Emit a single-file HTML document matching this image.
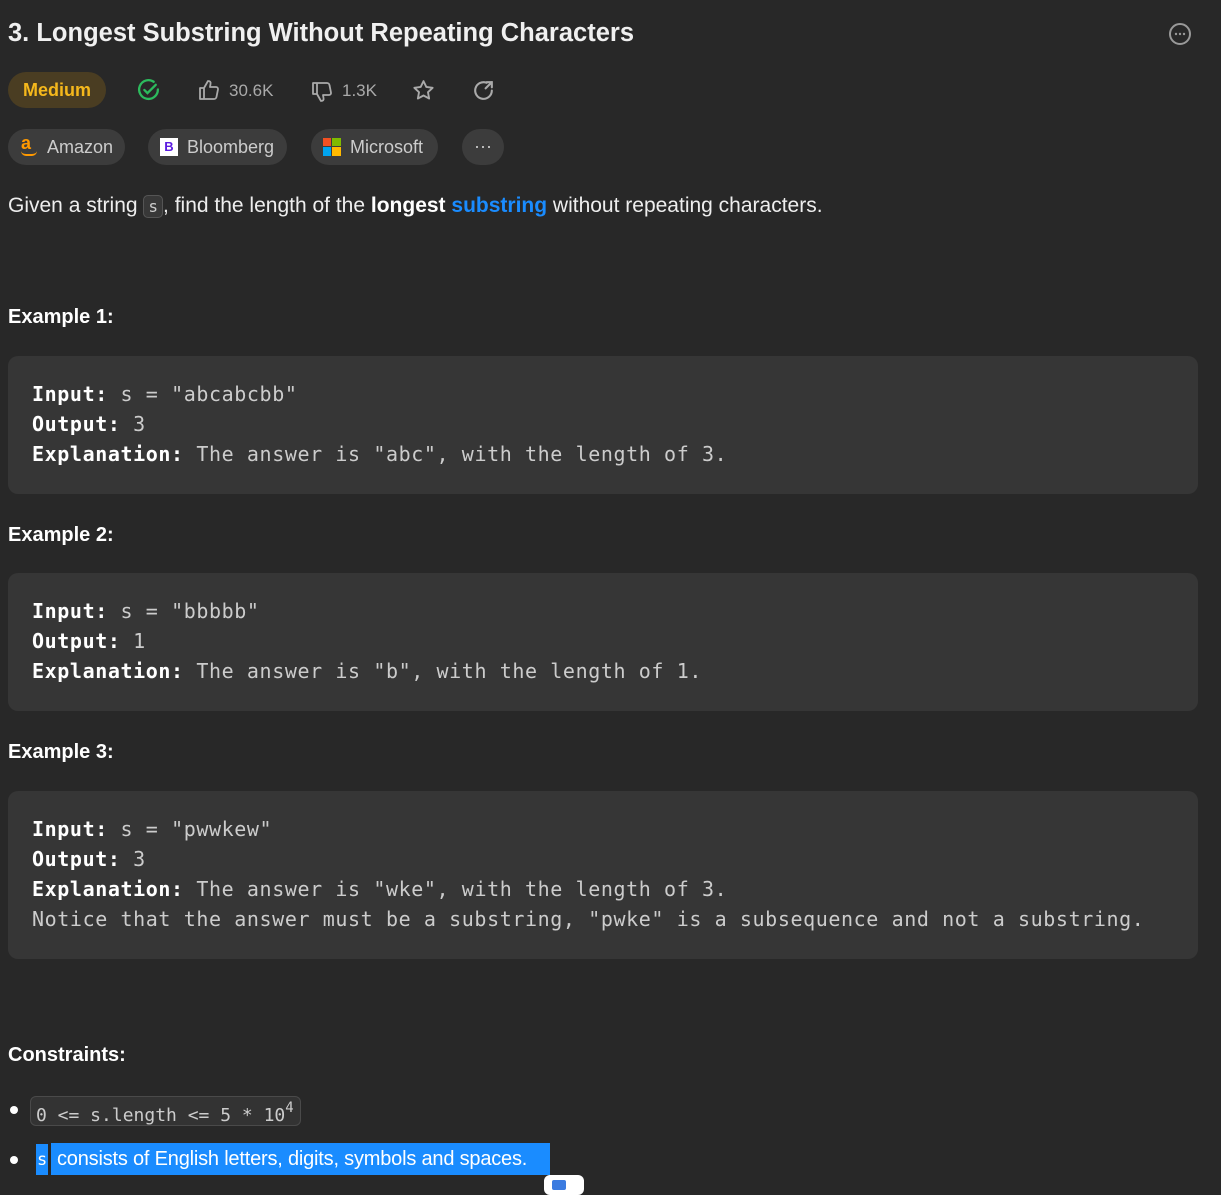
<!DOCTYPE html>
<html><head><meta charset="utf-8"><style>
body{margin:0;background:#282828;width:1221px;height:1185px;overflow:hidden;font-family:"Liberation Sans",sans-serif;color:#eee;position:relative}
.a{position:absolute;white-space:nowrap}
.title{left:8px;top:19px;font-size:25.5px;font-weight:bold;color:#f0f0f0}
.pill{position:absolute;height:36px;border-radius:18px;background:#3c3c3c;font-size:18px;color:#ccc;line-height:36px;box-sizing:border-box}
.mono{font-family:"DejaVu Sans Mono","Liberation Mono",monospace}
.box{position:absolute;left:8px;width:1190px;background:#363636;border-radius:10px}
.box pre{margin:0;position:absolute;left:24px;top:23px;font-family:"DejaVu Sans Mono",monospace;font-size:20px;letter-spacing:0.6px;line-height:30px;color:#ccc}
.box b{color:#fff}
.h{font-size:20px;font-weight:bold;color:#fff;left:8px}
.ic{color:#aaa;font-size:17px}
</style></head><body>
<div class="a title">3. Longest Substring Without Repeating Characters</div>
<svg class="a" style="left:1168px;top:22px" width="24" height="24" viewBox="0 0 24 24"><circle cx="12" cy="12" r="10" fill="none" stroke="#999" stroke-width="2"/><circle cx="8" cy="12" r="1.2" fill="#999"/><circle cx="12" cy="12" r="1.2" fill="#999"/><circle cx="16" cy="12" r="1.2" fill="#999"/></svg>

<div class="pill" style="left:8px;top:72px;width:98px;background:#4a3d22;color:#f5b81c;font-weight:bold;text-align:center">Medium</div>
<svg class="a" style="left:136px;top:78px" width="25" height="25" viewBox="0 0 24 24"><path d="M21 11a9 9 0 1 1-4-7.4" fill="none" stroke="#2cbb5d" stroke-width="2.2" stroke-linecap="round"/><path d="M8 11.5l3 3 8-8" fill="none" stroke="#2cbb5d" stroke-width="2.2" stroke-linecap="round"/></svg>
<svg class="a" style="left:197px;top:78px" width="24" height="24" viewBox="0 0 24 24"><path d="M3 10h4v11H3zM7 10l4-7c2 0 3 1 2.5 3L13 9h6a2 2 0 0 1 2 2.3l-1.5 7.5a2.5 2.5 0 0 1-2.5 2.2H7" fill="none" stroke="#aaa" stroke-width="1.8" stroke-linejoin="round"/></svg>
<div class="a ic" style="left:229px;top:81px">30.6K</div>
<svg class="a" style="left:310px;top:80px" width="24" height="24" viewBox="0 0 24 24"><path d="M3 3h4v11H3zM7 14l4 7c2 0 3-1 2.5-3L13 15h6a2 2 0 0 0 2-2.3l-1.5-7.5A2.5 2.5 0 0 0 17 3H7" fill="none" stroke="#aaa" stroke-width="1.8" stroke-linejoin="round"/></svg>
<div class="a ic" style="left:342px;top:81px">1.3K</div>
<svg class="a" style="left:411px;top:78px" width="25" height="25" viewBox="0 0 24 24"><path d="M12 3l2.7 5.6 6.1.8-4.5 4.2 1.1 6.1L12 16.8 6.6 19.7l1.1-6.1L3.2 9.4l6.1-.8z" fill="none" stroke="#aaa" stroke-width="1.8" stroke-linejoin="round"/></svg>
<svg class="a" style="left:471px;top:78px" width="25" height="25" viewBox="0 0 24 24"><path d="M20 12a8 8 0 1 1-5-7.4" fill="none" stroke="#aaa" stroke-width="2" stroke-linecap="round"/><path d="M14 10l6-6M15 4h5v5" fill="none" stroke="#aaa" stroke-width="2" stroke-linecap="round"/></svg>

<div class="pill" style="left:8px;top:129px;width:117px;padding-left:39px">Amazon</div>
<div class="a" style="left:21px;top:133px;color:#f90;font-weight:bold;font-size:18px">a</div>
<div class="a" style="left:21px;top:151px;width:16px;height:3px;border-bottom:2px solid #f90;border-radius:0 0 8px 8px"></div>
<div class="pill" style="left:148px;top:129px;width:139px;padding-left:39px">Bloomberg</div>
<div class="a" style="left:160px;top:138px;width:18px;height:18px;background:#fff;color:#5b1be0;font-weight:bold;font-size:13px;text-align:center;line-height:18px">B</div>
<div class="pill" style="left:311px;top:129px;width:127px;padding-left:39px">Microsoft</div>
<div class="a" style="left:323px;top:138px;width:18px;height:18px">
<div class="a" style="left:0;top:0;width:8px;height:8px;background:#f25022"></div><div class="a" style="left:9px;top:0;width:9px;height:8px;background:#7fba00"></div><div class="a" style="left:0;top:9px;width:8px;height:9px;background:#00a4ef"></div><div class="a" style="left:9px;top:9px;width:9px;height:9px;background:#ffb900"></div></div>
<div class="pill" style="left:462px;top:129px;width:42px;text-align:center;line-height:34px">···</div>

<div class="a" style="left:8px;top:194px;font-size:21px">Given a string <span class="mono" style="background:#383838;border:1px solid #555;border-radius:5px;padding:1px 4px;font-size:16px;color:#ccc">s</span>, find the length of the <b style="color:#fff">longest</b> <b style="color:#1a8cff">substring</b> without repeating characters.</div>

<div class="a h" style="top:306px">Example 1:</div>
<div class="box" style="top:356px;height:138px"><pre><b>Input:</b> s = "abcabcbb"
<b>Output:</b> 3
<b>Explanation:</b> The answer is "abc", with the length of 3.</pre></div>
<div class="a h" style="top:524px">Example 2:</div>
<div class="box" style="top:573px;height:138px"><pre><b>Input:</b> s = "bbbbb"
<b>Output:</b> 1
<b>Explanation:</b> The answer is "b", with the length of 1.</pre></div>
<div class="a h" style="top:741px">Example 3:</div>
<div class="box" style="top:791px;height:168px"><pre><b>Input:</b> s = "pwwkew"
<b>Output:</b> 3
<b>Explanation:</b> The answer is "wke", with the length of 3.
Notice that the answer must be a substring, "pwke" is a subsequence and not a substring.</pre></div>

<div class="a h" style="top:1044px">Constraints:</div>
<div class="a" style="left:10px;top:1106px;width:8px;height:8px;border-radius:50%;background:#fff"></div>
<div class="a mono" style="left:30px;top:1096px;height:30px;width:271px;background:#333;border:1px solid #4a4a4a;border-radius:6px;box-sizing:border-box;padding-left:5px;font-size:18px;line-height:26px;color:#ccc">0 &lt;= s.length &lt;= 5 * 10<sup style="font-size:14px;position:relative;top:-2px">4</sup></div>
<div class="a" style="left:10px;top:1156px;width:8px;height:8px;border-radius:50%;background:#fff"></div>
<div class="a" style="left:36px;top:1144px;width:12px;height:31px;background:#1a8cff"></div>
<div class="a mono" style="left:37px;top:1150px;font-size:17px;color:#fff">s</div>
<div class="a" style="left:51px;top:1143px;width:499px;height:32px;background:#1a8cff;color:#fff;font-size:20px;letter-spacing:-0.2px;line-height:32px;padding-left:6px;box-sizing:border-box;overflow:hidden">consists of English letters, digits, symbols and spaces.</div>
<div class="a" style="left:544px;top:1175px;width:40px;height:20px;background:#fff;border-radius:6px"></div>
<div class="a" style="left:552px;top:1180px;width:14px;height:10px;background:#3b7be0;border-radius:2px"></div>
</body></html>
